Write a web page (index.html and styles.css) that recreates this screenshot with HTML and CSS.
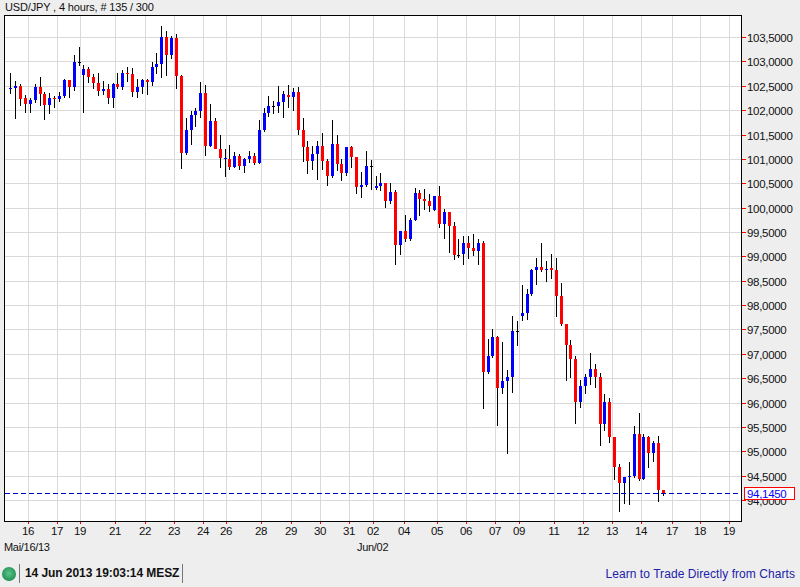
FILE: index.html
```html
<!DOCTYPE html>
<html lang="en">

<head>
    <meta charset="utf-8"/>
    <title>USD/JPY</title>
    <link rel="stylesheet" href="styles.css">
</head>

<body>
<div class="title">USD/JPY , 4 hours, # 135 / 300</div>
<svg id="chart" class="chart" width="800" height="541" viewBox="0 15 800 541"></svg>
<div class="status">
    <div class="clock">
        <span class="led"></span>
        <span class="time">14 Jun 2013 19:03:14 MESZ</span>
    </div>
    <a class="learn" href="#">Learn to Trade Directly from Charts</a>
</div>
<script src="script.js"></script>
</body>
</html>
```

FILE: styles.css
```css
* {
    padding: 0;
    margin: 0;
    box-sizing: border-box;
}

body {
    width: 800px;
    height: 587px;
    overflow: hidden;
    background-color: #eeeeee;
    font-family: "Liberation Sans", Arial, sans-serif;
    font-size: 12px;
    color: #111111;
}

.title {
    height: 15px;
    line-height: 15px;
    padding-left: 5px;
    font-size: 11px;
    letter-spacing: -0.15px;
}

.chart {
    display: block;
}

.frame {
    fill: #ffffff;
    stroke: #000000;
}

.grid {
    stroke: #d9d9d9;
}

.tick {
    stroke: #ff0000;
}

.wick {
    fill: #000000;
}

.up {
    fill: #0000ff;
}

.down {
    fill: #ff0000;
}

.doji {
    fill: #000000;
}

.axis-text {
    font-family: "Liberation Sans", Arial, sans-serif;
    font-size: 11.5px;
    letter-spacing: -0.3px;
    fill: #111111;
}

.date-text {
    font-family: "Liberation Sans", Arial, sans-serif;
    font-size: 11px;
    letter-spacing: -0.3px;
    fill: #111111;
}

.price-line {
    stroke: #0000cc;
    stroke-dasharray: 5 3;
}

.price-box {
    fill: #ffffff;
    stroke: #ff0000;
}

.price-text {
    font-family: "Liberation Sans", Arial, sans-serif;
    font-size: 11.5px;
    letter-spacing: -0.3px;
    fill: #0000ff;
}

.status {
    height: 31px;
    display: flex;
    justify-content: space-between;
    align-items: center;
    padding: 6px 5px 2px 2px;
}

.clock {
    display: flex;
    align-items: center;
}

.led {
    width: 14px;
    height: 14px;
    border-radius: 50%;
    background: radial-gradient(circle at 50% 45%, #5fc48a 0%, #2f9e62 55%, #0f7a44 100%);
}

.time {
    margin-left: 3px;
    padding: 0 3px 0 5px;
    height: 19px;
    line-height: 19px;
    font-weight: bold;
    letter-spacing: -0.07px;
    border-left: 1px solid #777777;
    border-right: 1px solid #777777;
}

.learn {
    color: #2222aa;
    letter-spacing: 0.06px;
    text-decoration: none;
}
```

FILE: script.js
```js
var SVG_NS = "http://www.w3.org/2000/svg";
var chart = document.getElementById("chart");

// frame of the plot, in page pixels
var LEFT = 4, TOP = 15, RIGHT = 741, BOTTOM = 521;

var priceLines = [
    [37, "103,5000"], [61, "103,0000"], [86, "102,5000"], [110, "102,0000"], [135, "101,5000"],
    [159, "101,0000"], [183, "100,5000"], [208, "100,0000"], [232, "99,5000"], [256, "99,0000"],
    [281, "98,5000"], [305, "98,0000"], [329, "97,5000"], [354, "97,0000"], [378, "96,5000"],
    [403, "96,0000"], [427, "95,5000"], [451, "95,0000"], [476, "94,5000"], [500, "94,0000"]
];

var dayLines = [
    [28, "16"], [57, "17"], [80, "19"], [115, "21"], [145, "22"], [174, "23"], [203, "24"],
    [226, "26"], [261, "28"], [291, "29"], [320, "30"], [349, "31"], [373, "02"], [404, "04"],
    [437, "05"], [466, "06"], [495, "07"], [519, "09"], [554, "11"], [583, "12"], [612, "13"],
    [641, "14"], [672, "17"], [700, "18"], [729, "19"]
];

// high, body top, body bottom, low, colour (b = up, r = down, k = flat)
var candles = [
    [73,88,89,94,"b"], [81,86,88,119,"b"], [84,86,99,106,"r"], [95,98,104,113,"r"], [98,100,104,113,"b"],
    [84,87,100,103,"b"], [77,87,94,106,"r"], [92,94,105,120,"r"], [93,98,105,114,"b"], [96,98,99,108,"r"],
    [92,96,99,102,"b"], [79,80,96,98,"b"], [80,80,87,98,"r"], [55,62,87,91,"b"], [47,62,63,66,"k"],
    [65,69,75,113,"b"], [67,69,77,83,"r"], [74,77,83,89,"r"], [73,83,91,96,"r"], [81,89,91,95,"b"],
    [84,89,98,104,"r"], [83,84,98,108,"b"], [73,84,87,89,"r"], [70,73,87,90,"b"], [67,73,74,82,"r"],
    [68,74,92,97,"r"], [79,87,92,98,"b"], [79,80,87,94,"b"], [79,80,82,95,"r"], [62,67,82,86,"b"],
    [53,64,67,74,"b"], [26,37,64,78,"b"], [31,37,55,76,"r"], [36,38,55,59,"b"], [34,38,76,89,"r"],
    [75,76,153,169,"r"], [118,130,153,155,"b"], [111,115,130,145,"b"], [108,111,115,127,"b"], [82,93,111,118,"b"],
    [85,93,146,156,"r"], [104,121,146,147,"b"], [118,121,149,149,"r"], [135,149,158,168,"r"], [149,158,159,177,"b"],
    [145,159,167,170,"r"], [152,156,167,168,"b"], [154,156,166,170,"r"], [158,159,166,173,"b"], [151,156,159,163,"b"],
    [153,156,163,165,"r"], [120,130,163,164,"b"], [108,113,130,132,"b"], [96,106,113,117,"b"], [101,106,107,114,"k"],
    [86,102,106,113,"b"], [91,94,102,118,"b"], [85,95,97,108,"r"], [88,92,97,111,"b"], [87,92,130,135,"r"],
    [118,130,147,162,"r"], [141,147,161,174,"r"], [146,154,161,170,"b"], [141,146,154,180,"b"], [133,146,161,170,"r"],
    [159,161,176,186,"r"], [120,144,176,178,"b"], [135,144,164,171,"r"], [159,164,173,181,"r"], [147,147,173,176,"b"],
    [146,147,157,168,"r"], [157,157,187,194,"r"], [172,185,187,198,"b"], [151,166,185,187,"b"], [160,166,167,190,"k"],
    [176,186,188,190,"b"], [173,183,186,191,"b"], [183,183,201,208,"r"], [183,192,201,204,"b"], [190,192,245,265,"r"],
    [231,231,245,255,"b"], [215,231,239,242,"r"], [218,220,239,241,"b"], [188,193,220,221,"b"], [190,193,199,216,"r"],
    [189,199,201,210,"r"], [194,201,206,212,"r"], [196,196,210,211,"b"], [186,196,224,228,"r"], [209,212,224,239,"b"],
    [212,212,226,253,"r"], [222,226,255,260,"r"], [239,255,256,258,"k"], [236,243,254,265,"b"], [236,243,248,259,"r"],
    [234,248,251,256,"r"], [239,243,251,265,"b"], [241,243,372,409,"r"], [339,356,372,374,"b"], [329,337,356,358,"b"],
    [336,337,388,426,"r"], [342,381,388,394,"b"], [370,377,381,454,"b"], [316,331,377,393,"b"], [321,331,332,346,"k"],
    [285,313,316,321,"b"], [289,294,313,320,"b"], [269,270,294,296,"b"], [258,267,270,285,"b"], [243,267,270,272,"r"],
    [261,269,270,282,"b"], [254,268,270,279,"r"], [258,270,296,317,"r"], [283,296,324,326,"r"], [324,324,345,381,"r"],
    [340,345,359,378,"r"], [356,359,402,424,"r"], [380,386,402,408,"b"], [374,377,386,394,"b"], [353,369,377,385,"b"],
    [364,369,377,388,"r"], [373,377,424,446,"r"], [394,402,424,431,"b"], [398,402,437,443,"r"], [437,437,467,480,"r"],
    [464,467,483,512,"r"], [477,477,483,504,"b"], [462,476,477,505,"b"], [426,434,476,478,"b"], [413,434,479,481,"r"],
    [434,437,479,480,"b"], [436,437,453,468,"r"], [441,443,453,462,"b"], [436,443,490,502,"r"], [490,490,494,496,"r"]
];

var bodyClass = { b: "up", r: "down", k: "doji" };

function add(name, attrs, text) {
    var el = document.createElementNS(SVG_NS, name);
    for (var key in attrs) {
        el.setAttribute(key, attrs[key]);
    }
    if (text) {
        el.textContent = text;
    }
    chart.appendChild(el);
    return el;
}

function hline(x1, x2, y, cls) {
    add("line", { x1: x1, x2: x2, y1: y + 0.5, y2: y + 0.5, "class": cls });
}

function vline(x, y1, y2, cls) {
    add("line", { x1: x + 0.5, x2: x + 0.5, y1: y1, y2: y2, "class": cls });
}

function crispRect(x, y, w, h, cls) {
    add("rect", { x: x, y: y, width: w, height: h, "class": cls, "shape-rendering": "crispEdges" });
}

add("rect", { x: LEFT + 0.5, y: TOP + 0.5, width: RIGHT - LEFT, height: BOTTOM - TOP, "class": "frame" });

priceLines.forEach(function (p) {
    hline(LEFT + 1, RIGHT, p[0], "grid");
    hline(RIGHT + 1, RIGHT + 5, p[0], "tick");
    add("text", { x: 747, y: p[0] + 5, "class": "axis-text" }, p[1]);
});

dayLines.forEach(function (d) {
    vline(d[0], TOP + 1, BOTTOM, "grid");
    vline(d[0], BOTTOM + 1, BOTTOM + 3, "tick");
    add("text", { x: d[0], y: 535, "text-anchor": "middle", "class": "axis-text" }, d[1]);
});

add("text", { x: 4, y: 551, "class": "date-text" }, "Mai/16/13");
add("text", { x: 357, y: 551, "class": "date-text" }, "Jun/02");

candles.forEach(function (c, i) {
    var x = Math.round(10.33 + 4.87 * i);
    crispRect(x, c[0], 1, c[3] - c[0], "wick");
    crispRect(x - 1, c[1], 3, Math.max(1, c[2] - c[1]), bodyClass[c[4]]);
});

hline(LEFT + 1, RIGHT, 493, "price-line");
add("rect", { x: 744.5, y: 487.5, width: 50, height: 12, "class": "price-box" });
add("text", { x: 747, y: 498, "class": "price-text" }, "94,1450");
```
